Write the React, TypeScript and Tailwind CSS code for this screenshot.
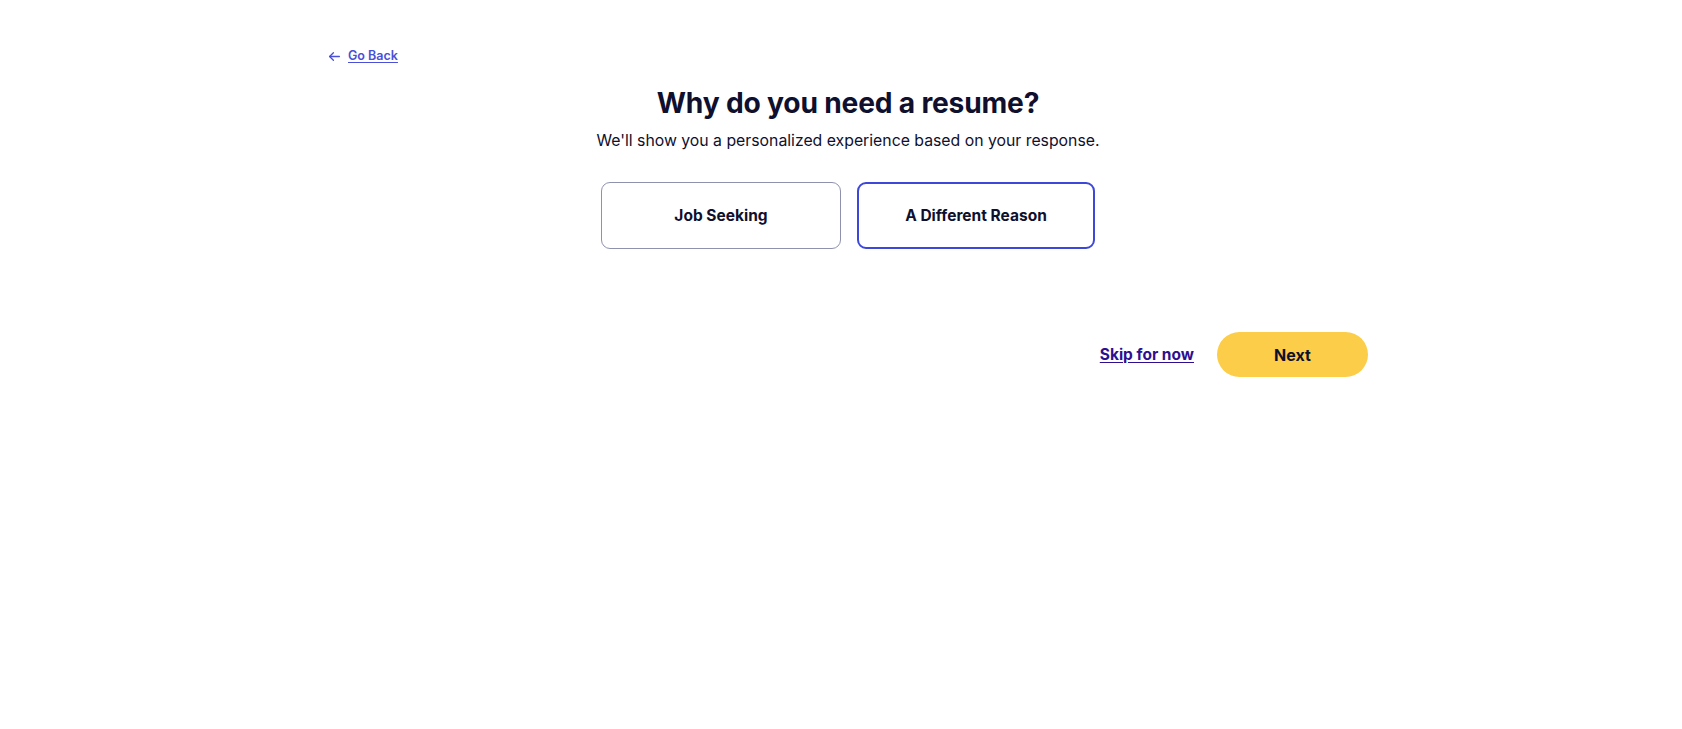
import React from "react";

export default function App() {
  return (
    <div
      className="min-h-[729px] w-full bg-white text-[#0f0f2e]"
      style={{ fontFamily: "Inter, 'Noto Sans', sans-serif" }}
    >
      <div className="flex justify-center pl-[14px]">
        <div className="flex w-[1040px] flex-col pt-[47px]">
          <a
            href="#"
            className="flex items-center gap-[7px] self-start text-[12.5px] font-semibold leading-[18px] text-[#4a50d8] underline underline-offset-2"
          >
            <svg width="13" height="13" viewBox="0 0 24 24" fill="none" stroke="#4a50d8" strokeWidth="2.4" strokeLinecap="round" strokeLinejoin="round">
              <path d="M21 12H3" />
              <path d="M10 5l-7 7 7 7" />
            </svg>
            <span>Go Back</span>
          </a>

          <div className="mt-[19px] flex flex-col items-center">
            <h1 className="text-[28.2px] font-bold leading-[38px] tracking-[-0.2px]">
              Why do you need a resume?
            </h1>
            <p className="mt-[7px] text-[15.8px] leading-[24px]">
              We'll show you a personalized experience based on your response.
            </p>
          </div>

          <div className="mt-[29px] flex justify-center gap-[16px]">
            <button className="flex h-[67px] w-[240px] items-center justify-center rounded-[9px] border border-[#8f92ad] bg-white text-[15.5px] font-bold">
              Job Seeking
            </button>
            <button className="flex h-[67px] w-[238px] items-center justify-center rounded-[9px] border-2 border-[#3d47d9] bg-white text-[15.5px] font-bold">
              A Different Reason
            </button>
          </div>

          <div className="mt-[83px] flex items-center justify-end gap-[23px]">
            <a href="#" className="text-[15.5px] font-bold text-[#2e0f8f] underline underline-offset-2">
              Skip for now
            </a>
            <button className="flex h-[45px] w-[151px] items-center justify-center rounded-full bg-[#fbcd48] text-[16px] font-bold">
              Next
            </button>
          </div>
        </div>
      </div>
    </div>
  );
}
